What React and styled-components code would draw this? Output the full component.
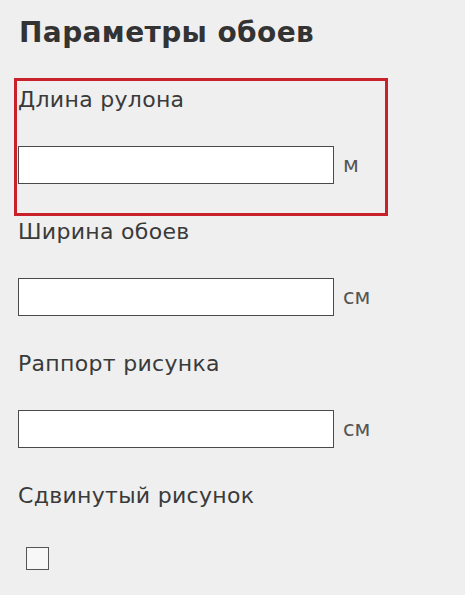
import React from 'react';
import styled, { createGlobalStyle } from 'styled-components';

const GlobalStyle = createGlobalStyle`
  body {
    margin: 0;
    background: #ffffff;
    font-family: "DejaVu Sans", "Liberation Sans", Arial, sans-serif;
  }
`;

const Panel = styled.div`
  width: 465px;
  height: 595px;
  box-sizing: border-box;
  background: #efefef;
  padding: 16px 0 0 17px;
`;

const Title = styled.h2`
  margin: 0 0 31px 2px;
  font-size: 28px;
  line-height: 34px;
  letter-spacing: 0.4px;
  font-weight: bold;
  color: #333333;
`;

const Field = styled.div`
  width: 368px;
  height: 132px;
  box-sizing: border-box;
  padding-top: 7px;
  outline: ${(p) => (p.highlighted ? '3px solid #c9212b' : 'none')};
`;

const Label = styled.div`
  margin-left: 1px;
  font-size: 22px;
  line-height: 24px;
  letter-spacing: 0.3px;
  color: #3a3a3a;
`;

const InputRow = styled.div`
  display: flex;
  align-items: center;
  margin-top: 34px;
`;

const TextInput = styled.input`
  width: 316px;
  height: 38px;
  box-sizing: border-box;
  margin: 0 0 0 1px;
  border: 1px solid #4a4a4a;
  background: #ffffff;
  padding: 0 6px;
  font-family: inherit;
  font-size: 18px;
`;

const Unit = styled.span`
  margin-left: 9px;
  font-size: 21px;
  color: #555555;
`;

const Checkbox = styled.input`
  appearance: none;
  display: block;
  width: 23px;
  height: 23px;
  margin: 39px 0 0 9px;
  box-sizing: border-box;
  border: 1px solid #555555;
  background: #f7f7f7;
`;

const fields = [
  { label: 'Длина рулона', unit: 'м', highlighted: true },
  { label: 'Ширина обоев', unit: 'см' },
  { label: 'Раппорт рисунка', unit: 'см' },
];

export default function App() {
  return (
    <>
      <GlobalStyle />
      <Panel>
        <Title>Параметры обоев</Title>
        {fields.map((f) => (
          <Field key={f.label} highlighted={f.highlighted}>
            <Label>{f.label}</Label>
            <InputRow>
              <TextInput type="text" />
              <Unit>{f.unit}</Unit>
            </InputRow>
          </Field>
        ))}
        <Field>
          <Label>Сдвинутый рисунок</Label>
          <Checkbox type="checkbox" />
        </Field>
      </Panel>
    </>
  );
}
